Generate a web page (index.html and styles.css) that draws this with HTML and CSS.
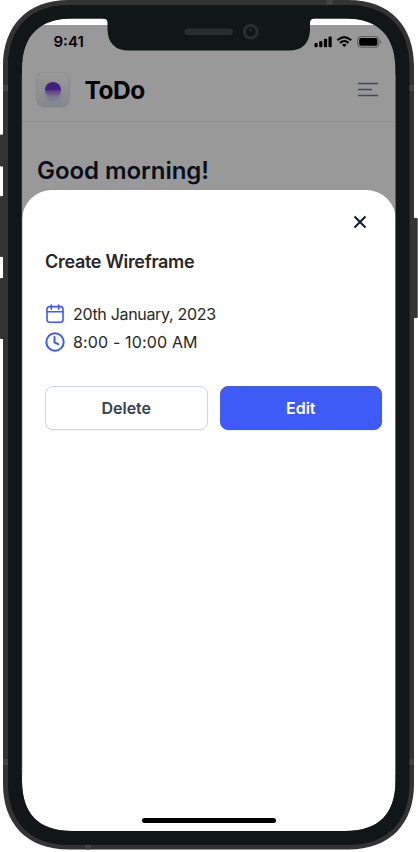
FILE: index.html
```html
<!DOCTYPE html>
<html lang="en">
<head>
<meta charset="utf-8">
<title>ToDo</title>
<link rel="stylesheet" href="styles.css">
</head>
<body>
<div class="phone">
  <main class="screen">
    <div class="backdrop">
      <div class="status">
        <span class="time">9:41</span>
        <svg class="indicators" width="68" height="14" viewBox="0 0 68 14">
          <rect x="0.5" y="8" width="3.2" height="4.2" rx="1"/>
          <rect x="5.2" y="6" width="3.2" height="6.2" rx="1"/>
          <rect x="9.9" y="3.7" width="3.2" height="8.5" rx="1"/>
          <rect x="14.5" y="1.5" width="3.2" height="10.7" rx="1"/>
          <g fill="none" stroke="#000" stroke-width="2.1">
            <path d="M23.4 5.3Q30.3-1.2 37.2 5.3"/>
            <path d="M26 8Q30.3 4 34.6 8"/>
          </g>
          <path d="M28 9.8Q30.3 7.9 32.6 9.8L30.3 12.1Z"/>
          <rect x="43.7" y="1.6" width="21.2" height="10.6" rx="3" fill="none" stroke="#000" stroke-opacity=".4"/>
          <rect x="45.2" y="3.1" width="18.2" height="7.6" rx="1.6"/>
          <path d="M66.1 5.2Q68.3 6.9 66.1 8.6Z" fill-opacity=".45"/>
        </svg>
      </div>
      <header class="header">
        <div class="logo"><i class="dot"></i></div>
        <span class="brand">ToDo</span>
        <svg class="menu" width="22" height="16" viewBox="0 0 22 16"><path d="M1.800 1.500h18.500M1.800 7.500h12.500M1.800 13.500h18.500"/></svg>
      </header>
      <h1 class="greeting">Good morning!</h1>
    </div>
    <section class="sheet">
      <svg class="close" width="14" height="14" viewBox="0 0 14 14"><path d="M1.500 1.500l11 11M12.500 1.500l-11 11"/></svg>
      <h2 class="title">Create Wireframe</h2>
      <div class="row">
        <svg class="icon" width="20" height="20" viewBox="0 0 20 20"><rect x="2" y="2.600" width="16" height="15.700" rx="2.700"/><path d="M2 7.800h16M6.300 1v4.200M13.700 1v4.200"/></svg>
        <span class="date">20th January, 2023</span>
      </div>
      <div class="row">
        <svg class="icon clock" width="20" height="20" viewBox="0 0 20 20"><circle cx="10" cy="10" r="8.700"/><path d="M9.500 5v5.300l3.700 1.900"/></svg>
        <span class="hours">8:00 - 10:00 AM</span>
      </div>
      <div class="actions">
        <button class="btn">Delete</button>
        <button class="btn primary">Edit</button>
      </div>
      <div class="home"></div>
    </section>
  </main>
  <svg class="frame" width="418" height="852" viewBox="0 0 418 852">
    <g fill="#333">
      <rect x="0" y="134.500" width="4" height="32" rx="1"/>
      <rect x="0" y="196" width="4" height="61" rx="1"/>
      <rect x="0" y="278" width="4" height="61" rx="1"/>
      <rect x="413" y="218" width="4.700" height="100" rx="1"/>
    </g>
    <path fill="#333" fill-rule="evenodd" d="M69 0H348C391 0 414 27 414 66V784C414 823 391 849.500 348 849.500H69C26 849.500 3 823 3 784V66C3 27 26 0 69 0Z M72 18.500C39 18.500 22 36 22 69V781C22 814 39 831 72 831H345.500C378.500 831 395.500 814 395.500 781V69C395.500 36 378.500 18.500 345.500 18.500Z"/>
    <path fill="#111617" fill-rule="evenodd" d="M69 5H348C388 5 409.500 29 409.500 66V784C409.500 821 388 845 348 845H69C29 845 8 821 8 784V66C8 29 29 5 69 5Z M72 18.500C39 18.500 22 36 22 69V781C22 814 39 831 72 831H345.500C378.500 831 395.500 814 395.500 781V69C395.500 36 378.500 18.500 345.500 18.500Z"/>
    <path fill="#111617" d="M103 18.500Q107.500 18.500 107.500 23V30Q108.500 50.500 129 50.500H289Q309 50.500 310 30V23Q310 18.500 314.500 18.500V17H103Z"/>
    <path fill="none" stroke="#777" stroke-width=".6" d="M22 75V775M395.500 75V775"/>
    <path fill="#434343" d="M3 85h5v6H3zM3 759h5v6H3zM409.500 85h4.500v6h-4.500zM409.500 759h4.500v6h-4.500zM326.500 0h6v5h-6zM85 845h6v4.500h-6z"/>
    <rect x="184.500" y="28.500" width="48.500" height="6.500" rx="3.200" fill="#292d2e"/>
    <circle cx="250.700" cy="31.700" r="6.400" fill="#111617" stroke="#292d2e" stroke-width="3.200"/>
    <circle cx="250.500" cy="29.700" r="1" fill="#393d3e"/>
  </svg>
</div>
</body>
</html>
```
FILE: styles.css
```css
* { box-sizing: border-box; }
body { margin: 0; background: #fff; font-family: Inter, "Liberation Sans", sans-serif; }
.phone { position: relative; width: 418px; height: 852px; overflow: hidden; }
.frame { position: absolute; inset: 0; pointer-events: none; }
.screen {
  display: flex; flex-direction: column;
  width: 374px; height: 831px; margin-left: 22px; padding-top: 25px;
  border-radius: 50px; overflow: hidden;
}
.backdrop { height: 195px; margin-bottom: -30px; background: #999; flex: none; }
.status { display: flex; justify-content: space-between; height: 33px; padding: 10px 14px 0 31.500px; }
.time { margin-top: -1px; font-size: 15px; line-height: 15px; font-weight: 600; letter-spacing: 0; }
.indicators { flex: none; }
.header {
  display: flex; align-items: center; height: 64px;
  padding: 0 17px 0 15px; border-bottom: 1px solid #8f9093;
}
.logo {
  display: flex; align-items: center; justify-content: center;
  width: 32px; height: 33px; border-radius: 7px;
  background: linear-gradient(#999, #85888e);
  box-shadow: 0 0 1px 1px rgba(16, 24, 40, .06), 0 1px 2px rgba(16, 24, 40, .14);
}
.dot {
  width: 16px; height: 16px; border-radius: 50%;
  background: linear-gradient(#3f2080 50%, #553787 50%, rgba(112, 96, 145, .25));
  box-shadow: 0 3px 4px -1px rgba(80, 55, 130, .35);
}
.brand { margin-left: 15.500px; font-size: 24.500px; line-height: 30px; font-weight: 700; letter-spacing: -.5px; }
.menu { margin-left: auto; fill: none; stroke: #41485a; stroke-width: 1.7; stroke-linecap: round; }
.greeting { margin: 33px 0 0 15px; font-size: 24px; line-height: 32px; font-weight: 600; letter-spacing: -.05px; color: #0a0f1a; white-space: nowrap; }
.sheet {
  display: flex; flex-direction: column; flex: 1;
  padding: 25px 14px 8px 23px; background: #fff; border-radius: 30px 30px 0 0;
}
.close { align-self: flex-end; margin-right: 15px; fill: none; stroke: #101828; stroke-width: 2; }
.title { margin: 21px 0 26px; font-size: 18px; line-height: 24px; font-weight: 600; color: #272727; letter-spacing: -.3px; white-space: nowrap; }
.row { display: flex; align-items: center; gap: 8px; height: 28px; font-size: 16px; color: #272727; white-space: nowrap; }
.icon { fill: none; stroke: #3f5bf6; stroke-width: 1.6; stroke-linecap: round; }
.clock { stroke-width: 2; }
.date { letter-spacing: -.32px; }
.hours { letter-spacing: .15px; }
.actions { display: grid; grid-template-columns: 1fr 1fr; gap: 12px; margin-top: 30px; }
.btn {
  height: 44px; padding: 0; border: 1px solid #d0d5e2; border-radius: 8px;
  background: #fff; color: #344054; font: 600 16px/24px Inter, sans-serif;
  box-shadow: 0 1px 2px rgba(16, 24, 40, .05);
}
.primary { background: #3f5bf6; border-color: #3f5bf6; color: #fff; }
.home { width: 134px; height: 5px; margin: auto 0 0 97px; border-radius: 3px; background: #000; }
```
